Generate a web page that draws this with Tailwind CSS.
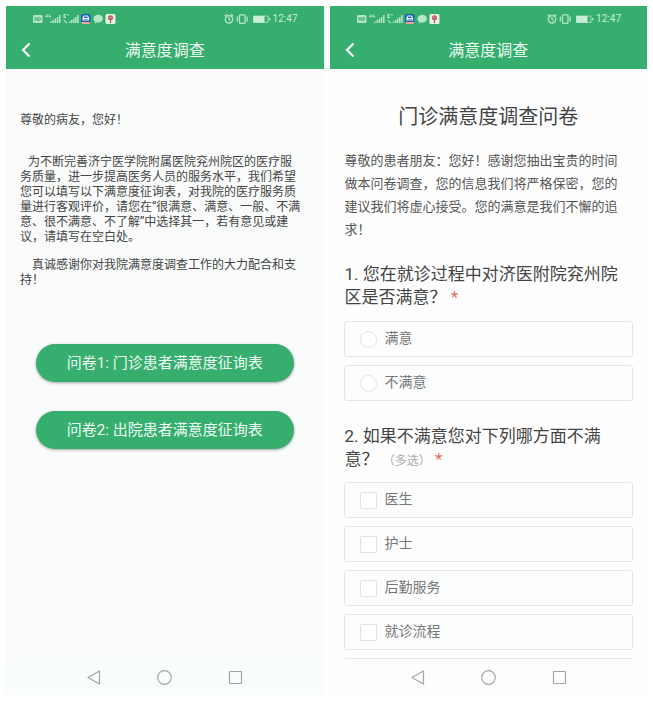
<!DOCTYPE html>
<html lang="zh-CN">
<head>
  <meta charset="UTF-8">
  <meta name="viewport" content="width=device-width, initial-scale=1">
  <title>满意度调查</title>
  <script src="https://cdn.jsdelivr.net/npm/@tailwindcss/browser@4"></script>
</head>
<body class="bg-white font-[Roboto,'Noto_Sans_CJK_SC',sans-serif] text-[#444]">

  <!-- shared icons -->
  <svg class="hidden" aria-hidden="true">
    <symbol id="status-left" viewBox="0 0 84 12">
      <g opacity=".8">
        <rect x="0" y="2" width="9.500" height="8" rx="1.500" fill="#d9f2e2"/>
        <path d="M2 4v4M4.200 4v4M2 6h2.200M5.800 4.300v3.400h.6c1.600 0 1.600-3.400 0-3.400z" fill="none" stroke="#35ae6e" stroke-width=".9"/>
        <path d="M14 1.500l-1.500 2h2M14 1.500v3M17.500 2h-1.500v2h1.500v-1" fill="none" stroke="#d9f2e2" stroke-width=".9"/>
        <path d="M18 10V8.500M20.200 10V7M22.400 10V5.500M24.600 10V4M26.800 10V2" stroke="#d9f2e2" stroke-width="1.500"/>
        <path d="M33 1.500h-2v3h2M31 3h1.500M34 2h2M31 7l1.500 2 1.500 1" fill="none" stroke="#d9f2e2" stroke-width="1.100"/>
        <path d="M36.500 10V8.500M38.600 10V7M40.700 10V5.500M42.800 10V4M44.900 10V2" stroke="#d9f2e2" stroke-width="1.500"/>
      </g>
      <rect x="48" y="1" width="9.500" height="10" rx="2" fill="#1d62b5"/>
      <path d="M50 7V5l1-2h3.500l1 2v2z" fill="none" stroke="#e6f2fb" stroke-width="1.200"/>
      <path d="M50 5.500h5.500" stroke="#e6f2fb"/>
      <path d="M48.500 9h8.500v1a1 1 0 0 1-1 1h-6.500a1 1 0 0 1-1-1z" fill="#f0a58c"/>
      <path d="M65.200 1.800c-2.700 0-4.700 1.700-4.700 3.900 0 1.300.7 2.300 1.800 3l-.5 1.800 2-1.100c.5.1.9.2 1.400.2 2.700 0 4.700-1.700 4.700-3.900s-2-3.900-4.700-3.900z" fill="#b5e6c9"/>
      <rect x="72.500" y="1" width="10" height="10" rx="1.500" fill="#e3f3e8"/>
      <circle cx="77.500" cy="4.700" r="2.500" fill="#d84a4a"/>
      <circle cx="77.500" cy="4.500" r="1.100" fill="#8fb6d8"/>
      <path d="M77.500 7v3.300" stroke="#b35a55" stroke-width="1.200"/>
    </symbol>
    <symbol id="status-right" viewBox="0 0 48 12">
      <g fill="none" stroke="#b8e6ca" stroke-width="1.300">
        <circle cx="5" cy="6.300" r="3.700"/>
        <path d="M5 4v2.500l1.500 1M.8 3.200L3 1.300M9.200 3.200L7 1.300"/>
        <rect x="15.500" y="1.800" width="5.500" height="8.500" rx=".8"/>
        <path d="M13.300 3.500v5M23.200 3.500v5"/>
        <path d="M29.500 3h14.500v6.500H29.500z" stroke-width=".8"/>
        <path d="M45.700 5v2.500" stroke-width="1.300"/>
      </g>
      <path d="M29.500 3h11v6.500h-11z" fill="#c9eed7"/>
    </symbol>
    <symbol id="chevron" viewBox="0 0 10 16">
      <path d="M8.500 1.500L2 8l6.500 6.500" fill="none" stroke="#fff" stroke-width="2.200"/>
    </symbol>
    <symbol id="nav-back" viewBox="0 0 15 15">
      <path d="M13.500 1v13L2 7.500z" fill="none" stroke="#a3a6a5" stroke-width="1.200" stroke-linejoin="round"/>
    </symbol>
    <symbol id="nav-home" viewBox="0 0 15 15">
      <circle cx="7.500" cy="7.500" r="6.800" fill="none" stroke="#a3a6a5" stroke-width="1.200"/>
    </symbol>
    <symbol id="nav-recent" viewBox="0 0 15 15">
      <rect x="1.500" y="1.500" width="12" height="12" rx=".5" fill="none" stroke="#a3a6a5" stroke-width="1.200"/>
    </symbol>
  </svg>

  <main class="flex h-screen gap-[6px] p-[6px]">

    <!-- intro screen -->
    <section class="flex min-w-0 flex-1 flex-col bg-[#fafcfb]">
      <header class="bg-[#35ae6e] text-white">
        <div class="flex h-[25px] items-center pr-[26px] pl-[27px]">
          <svg class="h-3 w-[84px]"><use href="#status-left"/></svg>
          <svg class="ml-auto h-3 w-12"><use href="#status-right"/></svg>
          <span class="ml-px text-[10px] leading-3 text-[#c9eed7]">12:47</span>
        </div>
        <div class="grid h-[38px] grid-cols-[40px_1fr_40px] items-center">
          <button type="button" aria-label="返回" class="pl-[15px]">
            <svg class="h-4 w-[10px]"><use href="#chevron"/></svg>
          </button>
          <h1 class="pt-px text-center text-base leading-6 text-[#effaf3]">满意度调查</h1>
        </div>
      </header>

      <div class="min-h-0 flex-1 overflow-y-auto px-[14px] pt-11 text-xs leading-[15px] [scrollbar-width:none]">
        <p>尊敬的病友，您好！</p>
        <p class="mt-[27px] pr-2 indent-2">为不断完善济宁医学院附属医院兖州院区的医疗服务质量，进一步提高医务人员的服务水平，我们希望您可以填写以下满意度征询表，对我院的医疗服务质量进行客观评价，请您在“很满意、满意、一般、不满意、很不满意、不了解”中选择其一，若有意见或建议，请填写在空白处。</p>
        <p class="mt-[13px] pr-2 indent-3">真诚感谢你对我院满意度调查工作的大力配合和支持！</p>
        <div class="mt-14 flex flex-col gap-[29px] px-4">
          <button type="button" class="h-[38px] rounded-full bg-[#35ae6e] text-[15px] text-[#effaf3] shadow-[0_1px_3px_rgba(0,0,0,0.35)]">问卷1: 门诊患者满意度征询表</button>
          <button type="button" class="h-[38px] rounded-full bg-[#35ae6e] text-[15px] text-[#effaf3] shadow-[0_1px_3px_rgba(0,0,0,0.35)]">问卷2: 出院患者满意度征询表</button>
        </div>
      </div>

      <nav class="flex h-[35px] shrink-0 items-center justify-center gap-14 bg-[#f9fdfb]">
        <button type="button" aria-label="后退"><svg class="size-[15px]"><use href="#nav-back"/></svg></button>
        <button type="button" aria-label="主页"><svg class="size-[15px]"><use href="#nav-home"/></svg></button>
        <button type="button" aria-label="最近任务"><svg class="size-[15px]"><use href="#nav-recent"/></svg></button>
      </nav>
    </section>

    <!-- questionnaire screen -->
    <section class="flex min-w-0 flex-1 flex-col bg-[#fefefe]">
      <header class="bg-[#35ae6e] text-white">
        <div class="flex h-[25px] items-center pr-[26px] pl-[27px]">
          <svg class="h-3 w-[84px]"><use href="#status-left"/></svg>
          <svg class="ml-auto h-3 w-12"><use href="#status-right"/></svg>
          <span class="ml-px text-[10px] leading-3 text-[#c9eed7]">12:47</span>
        </div>
        <div class="grid h-[38px] grid-cols-[40px_1fr_40px] items-center">
          <button type="button" aria-label="返回" class="pl-[15px]">
            <svg class="h-4 w-[10px]"><use href="#chevron"/></svg>
          </button>
          <h1 class="pt-px text-center text-base leading-6 text-[#effaf3]">满意度调查</h1>
        </div>
      </header>

      <form class="min-h-0 flex-1 overflow-y-auto px-[14px] pt-8 [scrollbar-width:none]">
        <h2 class="text-center text-xl leading-8">门诊满意度调查问卷</h2>
        <p class="mt-4 pr-[6px] pl-px text-[13px] leading-[23px] text-[#555]">尊敬的患者朋友：您好！感谢您抽出宝贵的时间做本问卷调查，您的信息我们将严格保密，您的建议我们将虚心接受。您的满意是我们不懈的追求！</p>

        <fieldset class="mt-[22px]">
          <legend class="mb-3 w-full px-px text-[17px] leading-[23px]">1. 您在就诊过程中对济医附院兖州院区是否满意？ <span class="text-[#e0705c]">*</span></legend>
          <div class="flex flex-col gap-2 text-sm text-[#777]">
            <label class="flex h-9 items-center gap-2 rounded-[3px] border border-[#e4e7e6] bg-[#fcfefe] px-[15px]">
              <input type="radio" name="satisfied" class="size-[17px] appearance-none rounded-full border border-[#e0e3e2] bg-white checked:border-[5px] checked:border-[#35ae6e]"><span class="pb-[2px]">满意</span>
            </label>
            <label class="flex h-9 items-center gap-2 rounded-[3px] border border-[#e4e7e6] bg-[#fcfefe] px-[15px]">
              <input type="radio" name="satisfied" class="size-[17px] appearance-none rounded-full border border-[#e0e3e2] bg-white checked:border-[5px] checked:border-[#35ae6e]"><span class="pb-[2px]">不满意</span>
            </label>
          </div>
        </fieldset>

        <fieldset class="mt-6">
          <legend class="mb-[11px] w-full px-px text-[17px] leading-[23px]">2. 如果不满意您对下列哪方面不满意？ <span class="text-xs text-[#aaa]">（多选）</span> <span class="text-[#e0705c]">*</span></legend>
          <div class="flex flex-col gap-2 text-sm text-[#777]">
            <label class="flex h-9 items-center gap-2 rounded-[3px] border border-[#e4e7e6] bg-[#fcfefe] px-[15px]">
              <input type="checkbox" name="reason" class="size-[17px] appearance-none rounded-[2px] border border-[#e0e3e2] bg-white checked:bg-[#35ae6e]"><span class="pb-[2px]">医生</span>
            </label>
            <label class="flex h-9 items-center gap-2 rounded-[3px] border border-[#e4e7e6] bg-[#fcfefe] px-[15px]">
              <input type="checkbox" name="reason" class="size-[17px] appearance-none rounded-[2px] border border-[#e0e3e2] bg-white checked:bg-[#35ae6e]"><span class="pb-[2px]">护士</span>
            </label>
            <label class="flex h-9 items-center gap-2 rounded-[3px] border border-[#e4e7e6] bg-[#fcfefe] px-[15px]">
              <input type="checkbox" name="reason" class="size-[17px] appearance-none rounded-[2px] border border-[#e0e3e2] bg-white checked:bg-[#35ae6e]"><span class="pb-[2px]">后勤服务</span>
            </label>
            <label class="flex h-9 items-center gap-2 rounded-[3px] border border-[#e4e7e6] bg-[#fcfefe] px-[15px]">
              <input type="checkbox" name="reason" class="size-[17px] appearance-none rounded-[2px] border border-[#e0e3e2] bg-white checked:bg-[#35ae6e]"><span class="pb-[2px]">就诊流程</span>
            </label>
            <div class="h-9 rounded-[3px] border border-[#e4e7e6] bg-[#fcfefe]"></div>
          </div>
        </fieldset>
      </form>

      <nav class="flex h-[35px] shrink-0 items-center justify-center gap-14 bg-[#fdfdfd]">
        <button type="button" aria-label="后退"><svg class="size-[15px]"><use href="#nav-back"/></svg></button>
        <button type="button" aria-label="主页"><svg class="size-[15px]"><use href="#nav-home"/></svg></button>
        <button type="button" aria-label="最近任务"><svg class="size-[15px]"><use href="#nav-recent"/></svg></button>
      </nav>
    </section>

  </main>
</body>
</html>
